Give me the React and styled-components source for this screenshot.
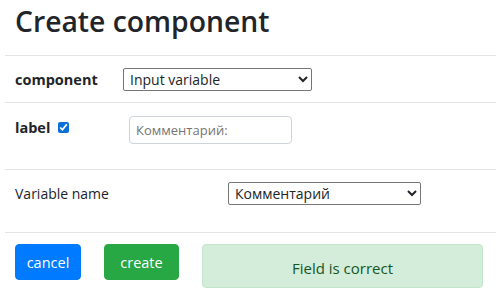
import React from "react";
import styled, { createGlobalStyle } from "styled-components";

const GlobalStyle = createGlobalStyle`
  body {
    margin: 0;
    font-family: "Open Sans", "Noto Sans", sans-serif;
    color: #212529;
    background: white;
  }
`;

const Page = styled.div`
  padding: 0 4px 0 5px;
`;

const Title = styled.h1`
  margin: 0;
  padding: 2px 0 0 10px;
  height: 53px;
  font-size: 28.3px;
  font-weight: 600;
  line-height: 38px;
`;

const Rule = styled.hr`
  margin: 0;
  border: 0;
  border-top: 1px solid #e2e4e6;
`;

const Row = styled.div`
  display: flex;
  align-items: ${props => props.align || "center"};
  height: ${props => props.height}px;
  padding-left: 10px;
  padding-top: ${props => props.top || 0}px;
  box-sizing: border-box;
`;

const Name = styled.label`
  display: flex;
  align-items: center;
  width: ${props => props.width}px;
  height: 22px;
  font-size: ${props => (props.bold ? 14.5 : 14)}px;
  font-weight: ${props => (props.bold ? 700 : 400)};
`;

const Check = styled.input`
  margin: 0 0 0 8px;
  width: 11px;
  height: 11px;
  accent-color: #0b6fd6;
`;

const Select = styled.select`
  width: ${props => props.width}px;
  height: 23px;
  font-family: inherit;
  font-size: 14px;
  padding: 0 2px;
  border: 1px solid #767676;
  border-radius: 2px;
  background: white;
  color: #212529;
`;

const TextInput = styled.input`
  box-sizing: border-box;
  width: 163px;
  height: 28px;
  padding: 0 6px;
  font-family: inherit;
  font-size: 13px;
  border: 1px solid #ced4da;
  border-radius: 4px;
  ::placeholder {
    color: #6c757d;
  }
`;

const Actions = styled.div`
  display: flex;
  align-items: flex-start;
  padding: 11px 0 0 10px;
`;

const Button = styled.button`
  height: 36px;
  width: ${props => props.width}px;
  margin-right: ${props => props.gap}px;
  font-family: inherit;
  font-size: 14.5px;
  color: white;
  border: 1px solid ${props => props.bg};
  background: ${props => props.bg};
  border-radius: 4px;
`;

const Alert = styled.div`
  width: 281px;
  height: 44px;
  display: flex;
  align-items: center;
  justify-content: center;
  padding-top: 3px;
  box-sizing: border-box;
  background: #d4edda;
  border: 1px solid #c3e6cb;
  border-radius: 4px;
  color: #155724;
  font-size: 15px;
`;

export default function App() {
  return (
    <Page>
      <GlobalStyle />
      <Title>Create component</Title>
      <Rule />
      <Row height={46}>
        <Name bold width={108}>component</Name>
        <Select width={189} defaultValue="input">
          <option value="input">Input variable</option>
        </Select>
      </Row>
      <Rule />
      <Row height={66} align="flex-start" top={13}>
        <Name bold width={114}>
          label
          <Check type="checkbox" defaultChecked />
        </Name>
        <TextInput placeholder="Комментарий:" />
      </Row>
      <Rule />
      <Row height={62} align="flex-start" top={12}>
        <Name width={213}>Variable name</Name>
        <Select width={193} defaultValue="c">
          <option value="c">Комментарий</option>
        </Select>
      </Row>
      <Rule />
      <Actions>
        <Button bg="#007bff" width={66} gap={23}>cancel</Button>
        <Button bg="#28a745" width={75} gap={23}>create</Button>
        <Alert>Field is correct</Alert>
      </Actions>
    </Page>
  );
}
